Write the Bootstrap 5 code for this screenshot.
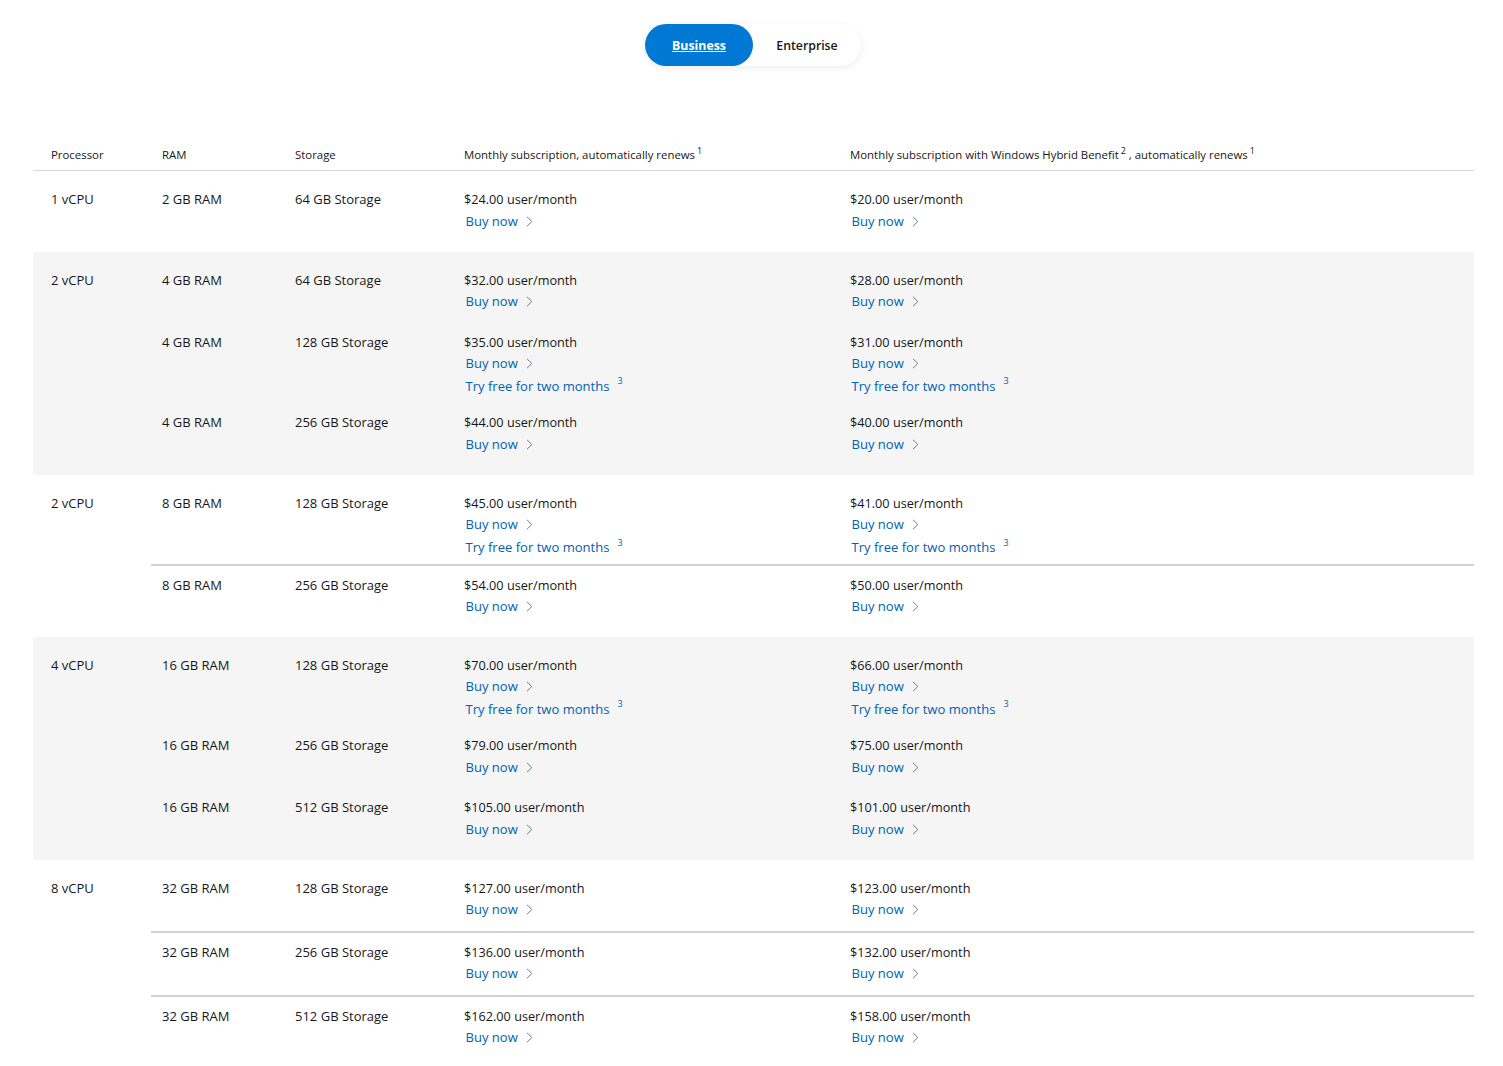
<!DOCTYPE html>
<html lang="en"><head><meta charset="utf-8"><title>Plans</title>
<link rel="stylesheet" href="https://cdn.jsdelivr.net/npm/bootstrap@5.3.0/dist/css/bootstrap.min.css">
<style>
html,body{background:#fff;overflow:hidden}
body{font-family:"Open Sans","Liberation Sans",sans-serif;color:#171717;font-size:13px}
.page-wrap{padding:24px 30px 0 33px}
.plan-toggle{width:216px;height:42px;border-radius:21px;box-shadow:0 2px 7px rgba(0,0,0,.07);margin-bottom:81px;font-size:12.3px}
.plan-toggle a{height:42px;padding-top:3px;border-radius:21px;color:#171717;text-decoration:none;font-weight:600}
.plan-toggle .tog-on{width:108px;background:#0078d4;color:#fff;font-weight:700;text-decoration:underline}
.plan-toggle .tog-off{width:108px}
.price-table{table-layout:fixed;width:1441px;margin:0;border-collapse:separate;border-spacing:0;--bs-table-bg:transparent;--bs-table-color:#171717}
.price-table>thead>tr>th{font-size:11.4px;font-weight:400;line-height:16px;padding:0 0 7px 11px;border-bottom:1px solid #d8d8d8;height:23px;white-space:nowrap}
.price-table>tbody>tr>td{border:0;padding:9px 0 10.5px 11px;line-height:21.5px;vertical-align:top;white-space:nowrap}
.price-table>thead>tr>th.col-proc,.price-table>tbody>tr>td.col-proc{padding-left:18px}
.col-proc{width:118px}.col-ram{width:133px}.col-sto{width:169px}.col-sub{width:386px}
.price-table sup{font-size:9px;top:-.6em;margin-left:2px}
.price-table>tbody.shade>tr>td{background:#f5f5f5}
.price-table>tbody>tr.g-first>td{padding-top:18px;padding-bottom:9.5px}
.price-table>tbody>tr.g-last>td{padding-bottom:20px}
.price-table>tbody>tr.g-after>td{padding-bottom:19px}
.price-table>tbody>tr.g-try>td{padding-bottom:10.5px}
.price-table>tbody>tr.ruled>td{padding-bottom:10px}
.price-table>tbody>tr.ruled>td:not(.col-proc){border-bottom:2px solid #d2d2d2}
.price-line{font-size:12.7px}
.buy-link{display:block;margin-left:1.5px;color:#0062b1;text-decoration:none;font-size:13.05px;font-weight:500}
.buy-link svg{width:7px;height:11px;margin-left:8px;vertical-align:-1px}
.try-link{margin-top:1.25px;margin-bottom:-5px}
.try-link sup{font-size:9px;margin-left:8px;top:-.7em}
.tight .buy-link{margin-top:-.6px;margin-bottom:.6px}
.loose .buy-link{margin-top:.6px;margin-bottom:-.6px}
</style></head><body>
<div class="page-wrap">
<div class="plan-toggle d-flex mx-auto"><a href="#" class="tog-on d-flex align-items-center justify-content-center">Business</a><a href="#" class="tog-off d-flex align-items-center justify-content-center">Enterprise</a></div>
<table class="table price-table"><thead><tr><th class="col-proc">Processor</th><th class="col-ram">RAM</th><th class="col-sto">Storage</th><th class="col-sub">Monthly subscription, automatically renews<sup>1</sup></th><th>Monthly subscription with Windows Hybrid Benefit<sup>2</sup> , automatically renews<sup>1</sup></th></tr></thead>
<tbody><tr class="g-first g-last"><td class="col-proc">1 vCPU</td><td>2 GB RAM</td><td>64 GB Storage</td><td><span class="price-line">$24.00 user/month</span><a class="buy-link" href="#">Buy now<svg viewBox="0 0 7 11"><path d="M1 .8 5.8 5.5 1 10.2" fill="none" stroke="#5f7f9e"/></svg></a></td><td><span class="price-line">$20.00 user/month</span><a class="buy-link" href="#">Buy now<svg viewBox="0 0 7 11"><path d="M1 .8 5.8 5.5 1 10.2" fill="none" stroke="#5f7f9e"/></svg></a></td></tr></tbody>
<tbody class="shade">
<tr class="g-first tight"><td class="col-proc">2 vCPU</td><td>4 GB RAM</td><td>64 GB Storage</td><td><span class="price-line">$32.00 user/month</span><a class="buy-link" href="#">Buy now<svg viewBox="0 0 7 11"><path d="M1 .8 5.8 5.5 1 10.2" fill="none" stroke="#5f7f9e"/></svg></a></td><td><span class="price-line">$28.00 user/month</span><a class="buy-link" href="#">Buy now<svg viewBox="0 0 7 11"><path d="M1 .8 5.8 5.5 1 10.2" fill="none" stroke="#5f7f9e"/></svg></a></td></tr>
<tr><td class="col-proc"></td><td>4 GB RAM</td><td>128 GB Storage</td><td><span class="price-line">$35.00 user/month</span><a class="buy-link" href="#">Buy now<svg viewBox="0 0 7 11"><path d="M1 .8 5.8 5.5 1 10.2" fill="none" stroke="#5f7f9e"/></svg></a><a class="buy-link try-link" href="#">Try free for two months<sup>3</sup></a></td><td><span class="price-line">$31.00 user/month</span><a class="buy-link" href="#">Buy now<svg viewBox="0 0 7 11"><path d="M1 .8 5.8 5.5 1 10.2" fill="none" stroke="#5f7f9e"/></svg></a><a class="buy-link try-link" href="#">Try free for two months<sup>3</sup></a></td></tr>
<tr class="g-last loose"><td class="col-proc"></td><td>4 GB RAM</td><td>256 GB Storage</td><td><span class="price-line">$44.00 user/month</span><a class="buy-link" href="#">Buy now<svg viewBox="0 0 7 11"><path d="M1 .8 5.8 5.5 1 10.2" fill="none" stroke="#5f7f9e"/></svg></a></td><td><span class="price-line">$40.00 user/month</span><a class="buy-link" href="#">Buy now<svg viewBox="0 0 7 11"><path d="M1 .8 5.8 5.5 1 10.2" fill="none" stroke="#5f7f9e"/></svg></a></td></tr>
</tbody>
<tbody>
<tr class="g-first ruled"><td class="col-proc">2 vCPU</td><td>8 GB RAM</td><td>128 GB Storage</td><td><span class="price-line">$45.00 user/month</span><a class="buy-link" href="#">Buy now<svg viewBox="0 0 7 11"><path d="M1 .8 5.8 5.5 1 10.2" fill="none" stroke="#5f7f9e"/></svg></a><a class="buy-link try-link" href="#">Try free for two months<sup>3</sup></a></td><td><span class="price-line">$41.00 user/month</span><a class="buy-link" href="#">Buy now<svg viewBox="0 0 7 11"><path d="M1 .8 5.8 5.5 1 10.2" fill="none" stroke="#5f7f9e"/></svg></a><a class="buy-link try-link" href="#">Try free for two months<sup>3</sup></a></td></tr>
<tr class="g-after"><td class="col-proc"></td><td>8 GB RAM</td><td>256 GB Storage</td><td><span class="price-line">$54.00 user/month</span><a class="buy-link" href="#">Buy now<svg viewBox="0 0 7 11"><path d="M1 .8 5.8 5.5 1 10.2" fill="none" stroke="#5f7f9e"/></svg></a></td><td><span class="price-line">$50.00 user/month</span><a class="buy-link" href="#">Buy now<svg viewBox="0 0 7 11"><path d="M1 .8 5.8 5.5 1 10.2" fill="none" stroke="#5f7f9e"/></svg></a></td></tr>
</tbody>
<tbody class="shade">
<tr class="g-first g-try"><td class="col-proc">4 vCPU</td><td>16 GB RAM</td><td>128 GB Storage</td><td><span class="price-line">$70.00 user/month</span><a class="buy-link" href="#">Buy now<svg viewBox="0 0 7 11"><path d="M1 .8 5.8 5.5 1 10.2" fill="none" stroke="#5f7f9e"/></svg></a><a class="buy-link try-link" href="#">Try free for two months<sup>3</sup></a></td><td><span class="price-line">$66.00 user/month</span><a class="buy-link" href="#">Buy now<svg viewBox="0 0 7 11"><path d="M1 .8 5.8 5.5 1 10.2" fill="none" stroke="#5f7f9e"/></svg></a><a class="buy-link try-link" href="#">Try free for two months<sup>3</sup></a></td></tr>
<tr class="loose"><td class="col-proc"></td><td>16 GB RAM</td><td>256 GB Storage</td><td><span class="price-line">$79.00 user/month</span><a class="buy-link" href="#">Buy now<svg viewBox="0 0 7 11"><path d="M1 .8 5.8 5.5 1 10.2" fill="none" stroke="#5f7f9e"/></svg></a></td><td><span class="price-line">$75.00 user/month</span><a class="buy-link" href="#">Buy now<svg viewBox="0 0 7 11"><path d="M1 .8 5.8 5.5 1 10.2" fill="none" stroke="#5f7f9e"/></svg></a></td></tr>
<tr class="g-last"><td class="col-proc"></td><td>16 GB RAM</td><td>512 GB Storage</td><td><span class="price-line">$105.00 user/month</span><a class="buy-link" href="#">Buy now<svg viewBox="0 0 7 11"><path d="M1 .8 5.8 5.5 1 10.2" fill="none" stroke="#5f7f9e"/></svg></a></td><td><span class="price-line">$101.00 user/month</span><a class="buy-link" href="#">Buy now<svg viewBox="0 0 7 11"><path d="M1 .8 5.8 5.5 1 10.2" fill="none" stroke="#5f7f9e"/></svg></a></td></tr>
</tbody>
<tbody>
<tr class="g-first ruled tight"><td class="col-proc">8 vCPU</td><td>32 GB RAM</td><td>128 GB Storage</td><td><span class="price-line">$127.00 user/month</span><a class="buy-link" href="#">Buy now<svg viewBox="0 0 7 11"><path d="M1 .8 5.8 5.5 1 10.2" fill="none" stroke="#5f7f9e"/></svg></a></td><td><span class="price-line">$123.00 user/month</span><a class="buy-link" href="#">Buy now<svg viewBox="0 0 7 11"><path d="M1 .8 5.8 5.5 1 10.2" fill="none" stroke="#5f7f9e"/></svg></a></td></tr>
<tr class="ruled tight"><td class="col-proc"></td><td>32 GB RAM</td><td>256 GB Storage</td><td><span class="price-line">$136.00 user/month</span><a class="buy-link" href="#">Buy now<svg viewBox="0 0 7 11"><path d="M1 .8 5.8 5.5 1 10.2" fill="none" stroke="#5f7f9e"/></svg></a></td><td><span class="price-line">$132.00 user/month</span><a class="buy-link" href="#">Buy now<svg viewBox="0 0 7 11"><path d="M1 .8 5.8 5.5 1 10.2" fill="none" stroke="#5f7f9e"/></svg></a></td></tr>
<tr class="g-last tight"><td class="col-proc"></td><td>32 GB RAM</td><td>512 GB Storage</td><td><span class="price-line">$162.00 user/month</span><a class="buy-link" href="#">Buy now<svg viewBox="0 0 7 11"><path d="M1 .8 5.8 5.5 1 10.2" fill="none" stroke="#5f7f9e"/></svg></a></td><td><span class="price-line">$158.00 user/month</span><a class="buy-link" href="#">Buy now<svg viewBox="0 0 7 11"><path d="M1 .8 5.8 5.5 1 10.2" fill="none" stroke="#5f7f9e"/></svg></a></td></tr>
</tbody></table>
</div>
<script src="https://cdn.jsdelivr.net/npm/bootstrap@5.3.0/dist/js/bootstrap.bundle.min.js"></script>
</body></html>
